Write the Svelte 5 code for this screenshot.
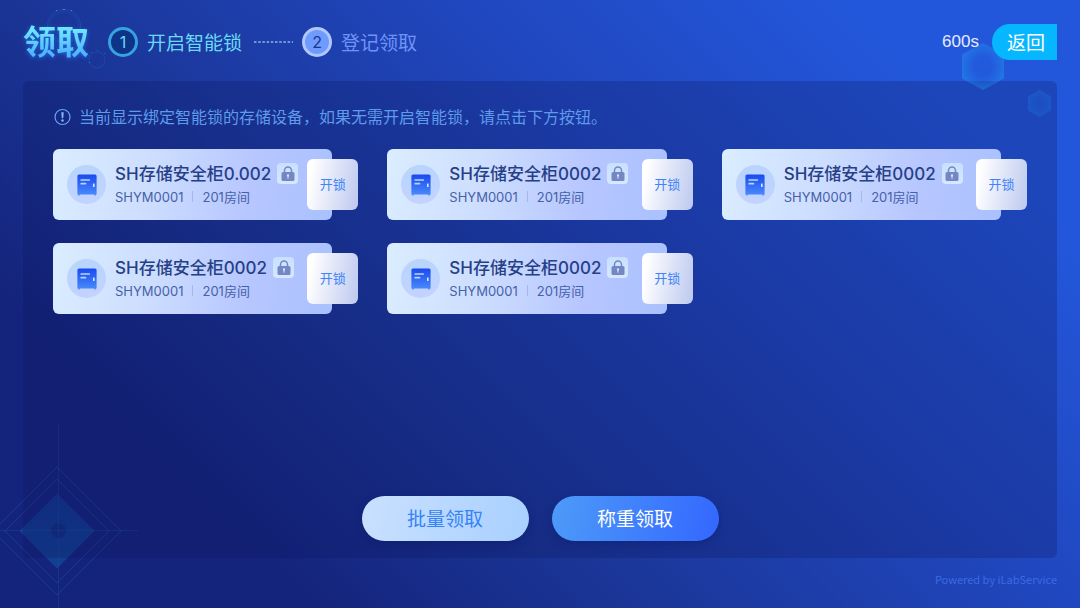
<script>
  const devices = [
    { name: 'SH存储安全柜0.002', code: 'SHYM0001', room: '201房间' },
    { name: 'SH存储安全柜0002', code: 'SHYM0001', room: '201房间' },
    { name: 'SH存储安全柜0002', code: 'SHYM0001', room: '201房间' },
    { name: 'SH存储安全柜0002', code: 'SHYM0001', room: '201房间' },
    { name: 'SH存储安全柜0002', code: 'SHYM0001', room: '201房间' }
  ];
</script>

<div class="page">
  <svg class="deco rings" width="80" height="70" viewBox="0 0 80 70" fill="none" aria-hidden="true">
    <g stroke="#2f7be6">
      <circle cx="34" cy="26" r="16.5" opacity=".26" />
      <circle cx="34" cy="26" r="14.5" opacity=".16" />
      <circle cx="67" cy="60" r="8" opacity=".24" />
    </g>
    <g fill="#31a5e8">
      <rect x="33" y="9" width="2" height="1" opacity=".8" />
      <rect x="26" y="10" width="1" height="1" opacity=".8" />
      <rect x="41" y="10" width="1" height="1" opacity=".8" />
      <rect x="67" y="50" width="1" height="1" opacity=".4" />
      <rect x="61" y="52" width="1" height="1" opacity=".4" />
      <rect x="74" y="53" width="1" height="1" opacity=".4" />
      <rect x="59" y="62" width="1" height="1" opacity=".6" />
    </g>
  </svg>

  <svg class="deco diamond" width="140" height="184" viewBox="0 0 140 184" fill="none" aria-hidden="true">
    <defs>
      <linearGradient id="diamondFill" x1="0" y1="0" x2="0" y2="1">
        <stop offset="0" stop-color="#13358c" />
        <stop offset="1" stop-color="#124092" />
      </linearGradient>
      <linearGradient id="safeFill" x1="0" y1="0" x2="0" y2="1">
        <stop offset="0" stop-color="#1a49f0" />
        <stop offset="1" stop-color="#4a8cfb" />
      </linearGradient>
    </defs>
    <path d="M57 69.500 94.500 107 57 144.500 19.500 107Z" fill="url(#diamondFill)" />
    <circle cx="58.500" cy="106.500" r="7.500" fill="#132f84" />
    <g stroke="#1a559f">
      <path d="M57 55 109 107 57 159 5 107Z" opacity=".5" />
      <path d="M57 43 121 107 57 171 -7 107Z" opacity=".5" />
      <path d="M58.500 1V184M0 106.500H138" opacity=".35" />
    </g>
  </svg>

  <header class="top">
    <h1>领取</h1>
    <ol class="steps">
      <li class="step current">
        <span class="num">1</span>
        <span class="label">开启智能锁</span>
      </li>
      <li class="step">
        <svg class="dots" width="40" height="2" viewBox="0 0 40 2" aria-hidden="true">
          <path d="M1 1H40" stroke="#86b6ef" stroke-width="1.300" stroke-dasharray="2.500 1.700" />
        </svg>
        <span class="num">2</span>
        <span class="label">登记领取</span>
      </li>
    </ol>
    <span class="timer">600s</span>
    <button class="back" type="button">返回</button>
  </header>

  <main class="panel">
    <p class="notice">
      <svg width="18" height="18" viewBox="0 0 18 18" fill="none" aria-hidden="true">
        <circle cx="9.500" cy="9" r="7.500" stroke="#6aa4f2" stroke-width="1.200" />
        <path d="M8.300 4.300h2.400l-.5 6h-1.400Z" fill="#8ab9f8" />
        <circle cx="9.500" cy="12.500" r="1.200" fill="#8ab9f8" />
      </svg>
      <span>当前显示绑定智能锁的存储设备，如果无需开启智能锁，请点击下方按钮。</span>
    </p>

    <ul class="grid">
      {#each devices as device}
        <li class="device">
          <div class="card">
            <span class="badge">
              <svg width="20" height="22" viewBox="0 0 20 22" aria-hidden="true">
                <path d="M2 .5h16a1.600 1.600 0 0 1 1.600 1.600V20.500h-.8V21.500h-1.600V20.500H2.800V21.500H1.200V20.500H.4V2.100A1.600 1.600 0 0 1 2 .5Z" fill="url(#safeFill)" />
                <path d="M4.200 6H12.300M4.200 9.700H8.500" stroke="#b9d3ff" stroke-width="1.700" stroke-linecap="round" />
                <rect x="16" y="9.500" width="1.600" height="3.400" rx=".5" fill="#dceaff" />
              </svg>
            </span>
            <div class="info">
              <div class="name">
                <h2>{device.name}</h2>
                <span class="lock">
                  <svg width="14" height="16" viewBox="0 0 14 16" aria-hidden="true">
                    <path d="M3.500 7V4.500a3.500 3.500 0 0 1 7 0V7" fill="none" stroke="#7487c2" stroke-width="1.500" />
                    <rect x=".5" y="6" width="13" height="9" rx="1.600" fill="#7487c2" />
                    <path d="M7 9.500V12.300" stroke="#dbe8ff" stroke-width="1" stroke-linecap="round" />
                    <circle cx="7" cy="9.400" r="1.100" fill="#dbe8ff" />
                  </svg>
                </span>
              </div>
              <p class="meta">
                <span>{device.code}</span>
                <span class="bar"></span>
                <span>{device.room}</span>
              </p>
            </div>
          </div>
          <button class="unlock" type="button">开锁</button>
        </li>
      {/each}
    </ul>

    <div class="actions">
      <button class="pill light" type="button">批量领取</button>
      <button class="pill solid" type="button">称重领取</button>
    </div>
  </main>

  <footer>Powered by iLabService</footer>

  <svg class="deco hexes" width="120" height="130" viewBox="0 0 120 130" aria-hidden="true">
    <defs>
      <radialGradient id="hexGlow">
        <stop offset=".4" stop-color="#1e8cf5" stop-opacity=".06" />
        <stop offset="1" stop-color="#1f9cf0" stop-opacity=".42" />
      </radialGradient>
      <radialGradient id="hexSoft">
        <stop offset="0" stop-color="#1a70e0" stop-opacity=".16" />
        <stop offset="1" stop-color="#1c80e4" stop-opacity=".3" />
      </radialGradient>
    </defs>
    <path d="M23 43 44 54.500V78.500L23 90 2 78.500V54.500Z" fill="url(#hexGlow)" />
    <path d="M79.500 90 91 96.500V110.500L79.500 117 68 110.500V96.500Z" fill="url(#hexSoft)" />
  </svg>
</div>

<style>
  :global(body) {
    margin: 0;
  }

  .page {
    position: relative;
    display: flex;
    flex-direction: column;
    box-sizing: border-box;
    min-height: 100vh;
    padding: 0 23px;
    overflow: hidden;
    font-family: Inter, 'Noto Sans CJK SC', sans-serif;
    color: #fff;
    background: linear-gradient(45deg, #14237b 0%, #14237b 18%, #1a3596 37%, #2046bd 62%, #2357db 86%, #2357db 100%);
  }

  h1,
  h2,
  p,
  ol,
  ul {
    margin: 0;
    padding: 0;
    list-style: none;
  }

  button {
    border: 0;
    padding: 0 0 2px;
    font-family: inherit;
    cursor: pointer;
  }

  .deco {
    position: absolute;
    pointer-events: none;
  }

  .rings {
    top: 0;
    left: 30px;
  }

  .diamond {
    bottom: 0;
    left: 0;
  }

  .hexes {
    top: 0;
    right: 0;
  }

  .top {
    position: relative;
    z-index: 1;
    display: flex;
    align-items: center;
    height: 36px;
    padding: 24px 0 21px;
  }

  h1 {
    margin-right: 19px;
    font-size: 33px;
    line-height: 36px;
    font-weight: 700;
    background: linear-gradient(180deg, #6fe6ff 15%, #4db4ff 85%);
    background-clip: text;
    color: transparent;
    filter: drop-shadow(0 1px 2px rgba(40, 130, 255, 0.7));
  }

  .steps {
    display: flex;
    flex: 1;
  }

  .step {
    display: flex;
    align-items: center;
    gap: 9px;
    font-size: 19px;
    color: #6f94f8;
  }

  .step.current {
    color: #6ad9f5;
  }

  .label {
    padding-bottom: 2px;
  }

  .dots {
    margin-left: 11px;
  }

  .num {
    display: flex;
    align-items: center;
    justify-content: center;
    box-sizing: border-box;
    width: 30px;
    height: 30px;
    border: 3px solid #b1c7ff;
    border-radius: 50%;
    background: #6f9bff;
    font-size: 16px;
    color: #17378f;
  }

  .current .num {
    border-color: #36a3e0;
    background: #0d3488;
    color: #6ad9f5;
  }

  .timer {
    margin-right: 13px;
    font-family: 'Liberation Sans', sans-serif;
    font-size: 17px;
    color: #e4ecff;
  }

  .back {
    height: 36px;
    padding: 0 12px 2px 15px;
    border-radius: 18px 0 0 18px;
    background: #06b6ff;
    font-size: 19px;
    color: #fff;
  }

  .panel {
    position: relative;
    display: flex;
    flex: 1;
    flex-direction: column;
    padding: 24px 30px 17px;
    border-radius: 6px;
    background: rgba(12, 18, 88, 0.25);
  }

  .notice {
    display: flex;
    align-items: center;
    gap: 8px;
    font-size: 16px;
    line-height: 24px;
    color: #5f9bea;
  }

  .grid {
    display: grid;
    grid-template-columns: repeat(3, 1fr);
    gap: 23px 29px;
    margin: 20px 0 24px;
  }

  .device {
    display: flex;
    align-items: center;
  }

  .card {
    display: flex;
    flex: 1;
    align-items: center;
    gap: 9px;
    min-width: 0;
    height: 71px;
    margin-right: -25px;
    padding-left: 14px;
    border-radius: 6px;
    background: linear-gradient(100deg, #dbedff 0%, #cbdcff 38%, #b7c6ff 70%, #a9c1ff 100%);
  }

  .badge {
    display: flex;
    flex: none;
    align-items: center;
    justify-content: center;
    width: 39px;
    height: 39px;
    border-radius: 50%;
    background: linear-gradient(180deg, #b7d5fd, #c4d2ff);
  }

  .name {
    display: flex;
    align-items: center;
    gap: 6px;
  }

  h2 {
    font-size: 17px;
    line-height: 24px;
    font-weight: 500;
    white-space: nowrap;
    color: #263f86;
  }

  .lock {
    display: flex;
    align-items: center;
    justify-content: center;
    width: 21px;
    height: 21px;
    border-radius: 4px;
    background: linear-gradient(180deg, #c8e0ff, #d6e8ff);
  }

  .meta {
    display: flex;
    align-items: center;
    gap: 9px;
    font-size: 13px;
    line-height: 22px;
    white-space: nowrap;
    color: #4661a8;
  }

  .bar {
    width: 1px;
    height: 11px;
    background: #a6b8e6;
  }

  .unlock {
    position: relative;
    flex: none;
    width: 51px;
    height: 51px;
    border-radius: 6px;
    background: linear-gradient(100deg, #fff 10%, #bcc8ef 100%);
    font-size: 13px;
    color: #4284f8;
  }

  .actions {
    display: flex;
    justify-content: center;
    gap: 23px;
    margin-top: auto;
  }

  .pill {
    width: 167px;
    height: 45px;
    border-radius: 23px;
    font-size: 19px;
    box-shadow: 0 3px 8px rgba(10, 20, 90, 0.3);
  }

  .light {
    background: linear-gradient(100deg, #cae0ff, #a8d0ff);
    color: #3683f5;
  }

  .solid {
    background: linear-gradient(100deg, #4d9bf8, #3367ff);
    color: #fff;
  }

  footer {
    padding: 12px 0 20px;
    font-family: 'Noto Sans CJK SC', sans-serif;
    font-size: 11px;
    line-height: 18px;
    text-align: right;
    color: #3a6be4;
  }
</style>
